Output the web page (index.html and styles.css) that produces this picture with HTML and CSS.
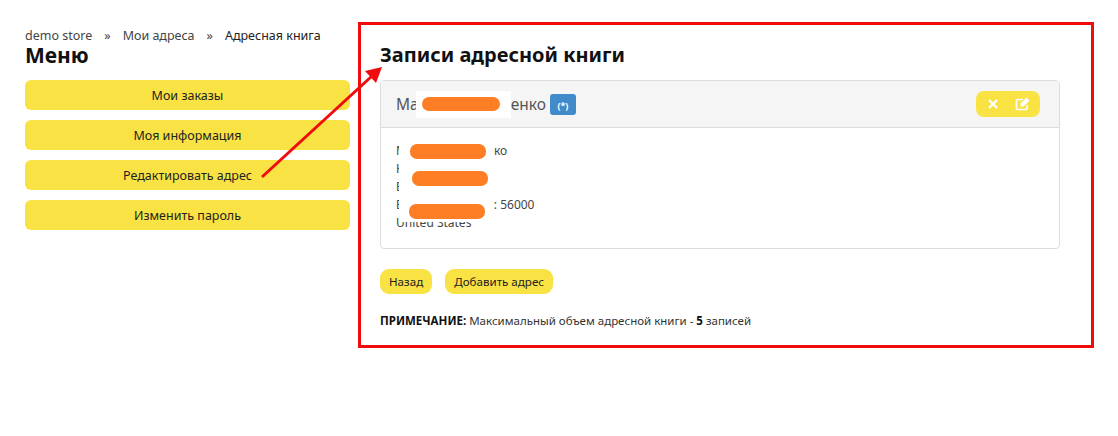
FILE: index.html
```html
<!DOCTYPE html>
<html lang="ru">
<head>
<meta charset="UTF-8" />
<meta name="viewport" content="width=device-width, initial-scale=1" />
<title>Адресная книга</title>
<link rel="stylesheet" href="styles.css">
</head>
<body>

<div class="page">

  <div class="sidebar">
    <div class="breadcrumb">
      <a href="#">demo store</a><span class="sep">»</span><a href="#">Мои адреса</a><span class="sep">»</span><span class="current">Адресная книга</span>
    </div>
    <h2 class="menu-title">Меню</h2>
    <div class="menu">
      <a class="menu-btn" href="#">Мои заказы</a>
      <a class="menu-btn" href="#">Моя информация</a>
      <a class="menu-btn" href="#">Редактировать адрес</a>
      <a class="menu-btn" href="#">Изменить пароль</a>
    </div>
  </div>

  <div class="content">
    <h1>Записи адресной книги</h1>

    <div class="panel">
      <div class="panel-heading">
        <div class="panel-title">
          <span>Ма</span>
          <span class="name-mask"><span class="blot"></span></span>
          <span>енко</span>
          <span class="default-tag">(*)</span>
        </div>
        <div class="panel-actions">
          <svg width="12" height="12" viewBox="0 0 12 12"><path d="M2 2l8 8M10 2l-8 8" stroke="#fff" stroke-width="2.4" fill="none"/></svg>
          <svg width="16" height="14" viewBox="0 0 16 14"><path d="M12 8v3.500a1 1 0 0 1-1 1H2.500a1 1 0 0 1-1-1V3.500a1 1 0 0 1 1-1H8" stroke="#fff" stroke-width="1.700" fill="none"/><path d="M5.500 6.500l6-6 3 3-6 6H5.500z" fill="#fff"/></svg>
        </div>
      </div>
      <div class="panel-body">
        <div class="address-line">М<span class="gap"></span>ко</div>
        <div class="address-line">Н</div>
        <div class="address-line">В</div>
        <div class="address-line">В<span class="gap gap-wide"></span>: 56000</div>
        <div class="address-line">United States</div>
      </div>
    </div>

    <div class="buttons">
      <a class="btn" href="#">Назад</a>
      <a class="btn" href="#">Добавить адрес</a>
    </div>

    <p class="note"><strong>ПРИМЕЧАНИЕ:</strong> Максимальный объем адресной книги - <strong>5</strong> записей</p>

    <!-- закрашенные данные -->
    <span class="address-mask"></span>
    <span class="blot blot-1"></span>
    <span class="blot blot-2"></span>
    <span class="blot blot-3"></span>
  </div>

</div>

<!-- стрелка поверх страницы -->
<svg class="arrow" width="1118" height="436" viewBox="0 0 1118 436">
  <path d="M262 177L372 76" stroke="#f00c0c" stroke-width="3" fill="none"/>
  <path d="M382 67L376 83 365 71z" fill="#f00c0c"/>
</svg>

</body>
</html>
```

FILE: styles.css
```css
body {
  margin: 0;
  background: #fff;
  font-family: "Noto Sans", Arial, sans-serif;
  font-size: 12px;
  color: #222;
}
a {
  color: inherit;
  text-decoration: none;
}
.page {
  display: flex;
  align-items: flex-start;
  padding: 22px 24px 0 25px;
}
.sidebar {
  width: 325px;
  margin-right: 8px;
  padding-top: 5px;
}
.breadcrumb {
  color: #444;
  font-size: 12.5px;
  line-height: 18px;
}
.breadcrumb .sep {
  margin: 0 12px;
}
.breadcrumb .current {
  color: #222;
}
.menu-title {
  margin: 0 0 15px 0;
  font-size: 21px;
  line-height: 20px;
  color: #111;
}
.menu {
  display: flex;
  flex-direction: column;
  gap: 10px;
}
.menu-btn {
  background: #f9e243;
  border-radius: 6px;
  height: 30px;
  font-size: 12.5px;
  line-height: 31px;
  text-align: center;
}

/* Рамка аннотации */
.content {
  position: relative;
  box-sizing: border-box;
  width: 736px;
  height: 326px;
  border: 3px solid #f00c0c;
  padding: 16px 31px 0 19px;
}
.content h1 {
  margin: 0 0 12px 0;
  font-size: 20px;
  line-height: 27px;
  color: #111;
}
.panel {
  border: 1px solid #ddd;
  border-radius: 4px;
  height: 169px;
  box-sizing: border-box;
}
.panel-heading {
  display: flex;
  justify-content: space-between;
  align-items: center;
  height: 46px;
  padding: 0 19px 0 15px;
  background: #f5f5f5;
  border-bottom: 1px solid #ddd;
}
.panel-title {
  display: flex;
  align-items: center;
  font-size: 15.5px;
  color: #555;
}
.name-mask {
  display: flex;
  align-items: center;
  width: 95px;
  height: 27px;
  margin-left: -3px;
  background: #fff;
}
.name-mask .blot {
  width: 78px;
  height: 14px;
  margin-left: 6px;
}
.default-tag {
  margin-left: 4px;
  background: #428bca;
  color: #fff;
  font-size: 9px;
  font-weight: bold;
  width: 26px;
  height: 21px;
  line-height: 24px;
  text-align: center;
  border-radius: 3px;
}
.panel-actions {
  display: flex;
  align-items: center;
  gap: 16px;
  background: #f9e243;
  border-radius: 8px;
  height: 26px;
  padding: 0 9px 0 11px;
}
.panel-body {
  padding: 14px 15px;
  color: #444;
}
.address-line {
  height: 18px;
  line-height: 18px;
}
.gap {
  display: inline-block;
  width: 87px;
}
.gap-wide {
  width: 90px;
}
.address-mask {
  position: absolute;
  left: 38px;
  top: 117px;
  width: 94px;
  height: 80px;
  background: #fff;
}
.blot {
  display: block;
  background: #fd7e25;
  border-radius: 7px;
}
.blot-1, .blot-2, .blot-3 {
  position: absolute;
  width: 76px;
  height: 15px;
}
.blot-1 {
  left: 49px;
  top: 119px;
}
.blot-2 {
  left: 51px;
  top: 146px;
}
.blot-3 {
  left: 48px;
  top: 179px;
}
.buttons {
  display: flex;
  gap: 13px;
  margin-top: 20px;
}
.btn {
  background: #f9e243;
  border-radius: 9px;
  height: 25px;
  font-size: 11.6px;
  line-height: 26px;
  padding: 0 9px;
}
.note {
  margin: 19px 0 0 0;
  font-size: 11.5px;
  line-height: 16px;
  color: #333;
}
.note strong {
  color: #111;
}
.arrow {
  position: absolute;
  left: 0;
  top: 0;
  pointer-events: none;
}
```
